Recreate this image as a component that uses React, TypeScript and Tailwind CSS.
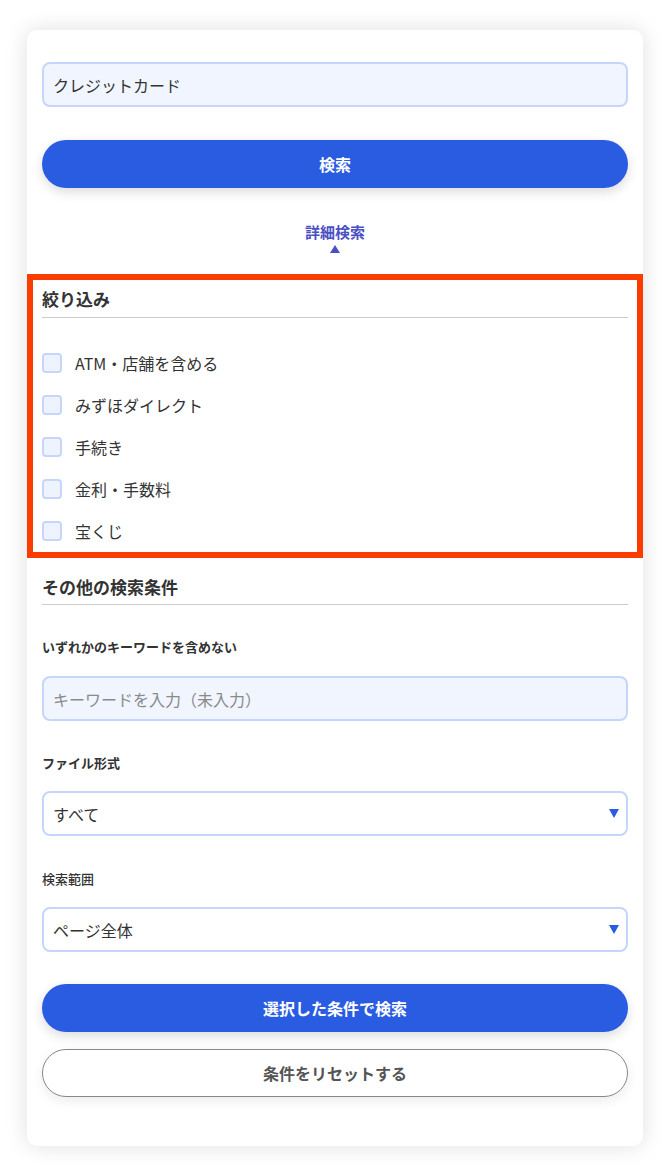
import React from "react";

const font = { fontFamily: '"Noto Sans CJK JP", "Noto Sans", sans-serif' };

function Caret() {
  return (
    <svg width="10" height="9" viewBox="0 0 10 9" className="shrink-0">
      <polygon points="0,0 10,0 5,9" fill="#2a5ce1" />
    </svg>
  );
}

function Select({ value, mt }: { value: string; mt: string }) {
  return (
    <div className={`${mt} flex h-[45px] items-center justify-between rounded-[8px] border-2 border-[#c6d6fb] bg-white pl-[9px] pr-[7px] text-[16px] text-[#333]`}>
      <span>{value}</span>
      <Caret />
    </div>
  );
}

export default function App() {
  const items = ["ATM・店舗を含める", "みずほダイレクト", "手続き", "金利・手数料", "宝くじ"];
  return (
    <div className="min-h-[1175px] bg-white pt-[30px] pb-[30px]" style={font}>
      <div className="mx-[27px] w-[616px] rounded-[10px] bg-white px-[15px] pt-[32px] pb-[49px] shadow-[0_0_22px_rgba(0,0,0,0.13)]">
        <div className="flex h-[45px] items-center rounded-[8px] border-2 border-[#c6d6fb] bg-[#f0f5ff] px-[9px] text-[16px] text-[#333]">
          クレジットカード
        </div>
        <button className="mt-[33px] flex h-[48px] w-full items-center justify-center rounded-full bg-[#2a5ce1] text-[16px] font-bold text-white shadow-[0_4px_12px_rgba(0,0,0,0.14)]">
          検索
        </button>
        <div className="mt-[34px] flex flex-col items-center">
          <div className="text-[15px] font-bold leading-[20px] text-[#4b4fc4]">詳細検索</div>
          <svg width="10" height="8" viewBox="0 0 10 8" className="mt-[3px]">
            <polygon points="5,0 10,8 0,8" fill="#4b4fc4" />
          </svg>
        </div>

        <div className="-mx-[15px] mt-[21px] border-[6px] border-[#fa3c00] px-[9px] pt-[7px]">
          <div className="border-b border-[#cccccc] pb-[6px] text-[17px] font-bold leading-[24px] text-[#333]">
            絞り込み
          </div>
          <div className="mt-[24px]">
            {items.map((t) => (
              <div key={t} className="flex h-[42px] items-center">
                <div className="h-[20px] w-[20px] rounded-[4px] border-2 border-[#c6d6fb] bg-[#eef3ff]" />
                <span className="ml-[13px] text-[16px] text-[#333]">{t}</span>
              </div>
            ))}
          </div>
        </div>

        <div className="mt-[17px] border-b border-[#cccccc] pb-[5px] text-[17px] font-bold leading-[24px] text-[#333]">
          その他の検索条件
        </div>
        <div className="mt-[33px] text-[13px] font-bold leading-[18px] text-[#333]">いずれかのキーワードを含めない</div>
        <div className="mt-[20px] flex h-[45px] items-center rounded-[8px] border-2 border-[#c6d6fb] bg-[#f0f5ff] px-[9px] text-[16px] text-[#8a8a8a]">
          キーワードを入力（未入力）
        </div>
        <div className="mt-[33px] text-[13px] font-bold leading-[18px] text-[#333]">ファイル形式</div>
        <Select value="すべて" mt="mt-[19px]" />
        <div className="mt-[34px] text-[13px] font-medium leading-[18px] text-[#333]">検索範囲</div>
        <Select value="ページ全体" mt="mt-[19px]" />
        <button className="mt-[32px] flex h-[48px] w-full items-center justify-center rounded-full bg-[#2a5ce1] text-[16px] font-bold text-white shadow-[0_4px_12px_rgba(0,0,0,0.14)]">
          選択した条件で検索
        </button>
        <button className="mt-[17px] flex h-[48px] w-full items-center justify-center rounded-full border border-[#888] bg-white text-[16px] font-bold text-[#555] shadow-[0_4px_12px_rgba(0,0,0,0.08)]">
          条件をリセットする
        </button>
      </div>
    </div>
  );
}
